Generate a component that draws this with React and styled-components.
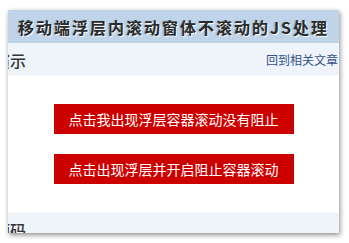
import React from "react";
import styled, { createGlobalStyle } from "styled-components";

const GlobalStyle = createGlobalStyle`
  html, body {
    margin: 0;
    padding: 0;
    background: #fff;
  }
  body {
    font-family: "Noto Sans CJK SC", "Liberation Sans", sans-serif;
    color: #333;
  }
`;

const Page = styled.div`
  padding: 10px 10px 10px 8px;
`;

const Frame = styled.div`
  width: 331px;
  height: 223px;
  overflow: hidden;
  background: #fff;
  box-shadow: 1px 2px 5px rgba(0, 0, 0, 0.45);
  display: flex;
  flex-direction: column;
`;

const TitleBar = styled.h1`
  margin: 0;
  height: 33px;
  flex-shrink: 0;
  display: flex;
  align-items: center;
  justify-content: center;
  background: #bfd4e9;
  font-family: "Noto Sans CJK SC", "Liberation Serif", serif;
  font-size: 16px;
  font-weight: 700;
  letter-spacing: 2px;
  color: #2b2b2b;
  text-shadow: 1px 1px 1px #fff, -1px 0 1px rgba(120, 120, 120, 0.5);
`;

const SectionHead = styled.div`
  height: ${(p) => p.$height}px;
  flex-shrink: 0;
  display: flex;
  align-items: ${(p) => (p.$bottom ? "flex-start" : "center")};
  justify-content: space-between;
  background: #eff3fa;
  padding-right: 1px;
`;

const Heading = styled.h3`
  margin: ${(p) => (p.$bottom ? "5px" : "2px")} 0 0 -14px;
  font-size: 16px;
  font-weight: 500;
  color: #333;
  white-space: nowrap;
`;

const BackLink = styled.a`
  font-size: 12px;
  color: #34538b;
  text-decoration: none;
  margin-top: 1px;
`;

const Demo = styled.div`
  height: 138px;
  flex-shrink: 0;
  display: flex;
  flex-direction: column;
  align-items: center;
  justify-content: center;
  gap: 20px;
`;

const RedButton = styled.button`
  width: 240px;
  height: 30px;
  border: 0;
  padding: 0;
  background: #cd0000;
  color: #fff;
  font-family: "Noto Sans CJK SC", sans-serif;
  font-size: 14px;
  line-height: 30px;
  cursor: pointer;
`;

const buttons = [
  "点击我出现浮层容器滚动没有阻止",
  "点击出现浮层并开启阻止容器滚动",
];

export default function App() {
  return (
    <Page>
      <GlobalStyle />
      <Frame>
        <TitleBar>移动端浮层内滚动窗体不滚动的JS处理</TitleBar>
        <SectionHead $height={32}>
          <Heading>演示</Heading>
          <BackLink href="#">回到相关文章</BackLink>
        </SectionHead>
        <Demo>
          {buttons.map((text) => (
            <RedButton key={text}>{text}</RedButton>
          ))}
        </Demo>
        <SectionHead $height={40} $bottom>
          <Heading $bottom>源码</Heading>
        </SectionHead>
      </Frame>
    </Page>
  );
}
